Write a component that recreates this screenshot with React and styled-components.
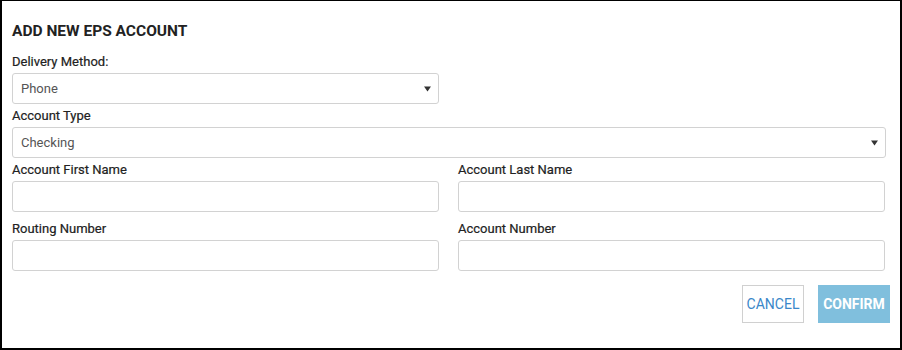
import styled, { createGlobalStyle } from "styled-components";

const GlobalStyle = createGlobalStyle`
  html, body {
    margin: 0;
    padding: 0;
    background: #ffffff;
  }
  * {
    box-sizing: border-box;
  }
`;

function Arrow() {
  return (
    <svg width="7" height="6" viewBox="0 0 7 6">
      <path d="M0 0.5 H7 L3.5 5.5 Z" fill="#333" />
    </svg>
  );
}

function SelectField({ label, value, half }) {
  return (
    <Field half={half}>
      <Label>{label}</Label>
      <SelectBox>
        <span>{value}</span>
        <Arrow />
      </SelectBox>
    </Field>
  );
}

function TextField({ label }) {
  return (
    <Field>
      <Label>{label}</Label>
      <Input type="text" />
    </Field>
  );
}

export default function App() {
  return (
    <>
      <GlobalStyle />
      <Modal>
        <Title>ADD NEW EPS ACCOUNT</Title>
        <SelectField label="Delivery Method:" value="Phone" half />
        <SelectField label="Account Type" value="Checking" />
        <Row>
          <TextField label="Account First Name" />
          <TextField label="Account Last Name" />
        </Row>
        <Row>
          <TextField label="Routing Number" />
          <TextField label="Account Number" />
        </Row>
        <Actions>
          <CancelButton>CANCEL</CancelButton>
          <ConfirmButton>CONFIRM</ConfirmButton>
        </Actions>
      </Modal>
    </>
  );
}

const Modal = styled.div`
  width: 902px;
  height: 350px;
  border: 2px solid #000;
  border-top-width: 1px;
  padding: 20px 14px 0 10px;
  font-family: Roboto, "Liberation Sans", sans-serif;
  color: #333;
  display: flex;
  flex-direction: column;
`;

const Title = styled.h2`
  margin: 0 0 13px 0;
  font-size: 15.5px;
  line-height: 20px;
  font-weight: 700;
  color: #222;
`;

const Field = styled.div`
  display: flex;
  flex-direction: column;
  width: ${({ half }) => (half ? "427px" : "100%")};
  margin-bottom: 4px;
`;

const Label = styled.label`
  font-size: 13px;
  line-height: 16px;
  font-weight: 400;
  color: #222;
  margin-bottom: 3px;
  -webkit-text-stroke: 0.2px #222;
`;

const SelectBox = styled.div`
  height: 31px;
  border: 1px solid #d2d2d2;
  border-radius: 3px;
  padding: 0 7px 0 8px;
  display: flex;
  align-items: center;
  justify-content: space-between;
  font-size: 13px;
  color: #555;
`;

const Input = styled.input`
  height: 31px;
  border: 1px solid #d2d2d2;
  border-radius: 3px;
  padding: 0 8px;
  font-family: inherit;
  font-size: 13px;
  outline: none;
`;

const Row = styled.div`
  display: grid;
  grid-template-columns: 427px 427px;
  column-gap: 19px;
  margin-bottom: 5px;
`;

const Actions = styled.div`
  display: flex;
  justify-content: flex-end;
  gap: 14px;
  margin-top: 5px;
  margin-right: -4px;
`;

const CancelButton = styled.button`
  height: 38px;
  width: 62px;
  padding: 0;
  background: #fff;
  border: 1px solid #d0d0d0;
  color: #3a87c9;
  font-family: inherit;
  font-size: 14px;
  font-weight: 400;
`;

const ConfirmButton = styled.button`
  height: 38px;
  width: 72px;
  padding: 0;
  background: #80bfdd;
  border: none;
  color: #fff;
  font-family: inherit;
  font-size: 14px;
  font-weight: 700;
`;
